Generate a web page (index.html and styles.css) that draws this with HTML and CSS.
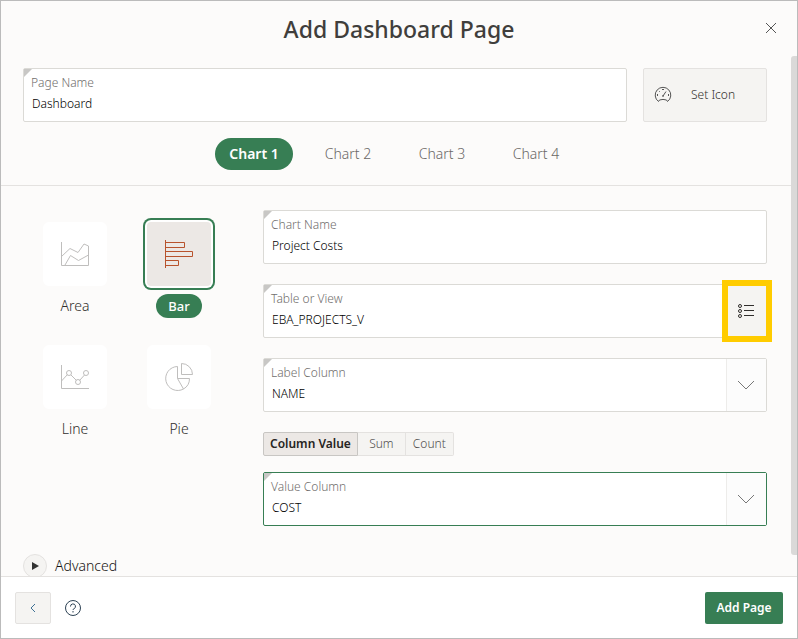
FILE: index.html
```html
<!DOCTYPE html>
<html lang="en">
<head>
    <meta charset="UTF-8">
    <meta name="viewport" content="width=device-width, initial-scale=1.0">
    <title>Add Dashboard Page</title>
    <link rel="stylesheet" href="styles.css">
</head>
<body>
    <div class="dialog">
        <header class="dialog-header">
            <h1>Add Dashboard Page</h1>
            <button type="button" class="close" aria-label="Close">
                <svg width="12" height="12" viewBox="0 0 12 12"><path d="M1 1l10 10M11 1L1 11"/></svg>
            </button>
        </header>

        <div class="dialog-body">
            <div class="page-row">
                <div class="field required">
                    <div class="field-main">
                        <label for="page-name">Page Name</label>
                        <input type="text" id="page-name" value="Dashboard">
                    </div>
                </div>
                <button type="button" class="set-icon">
                    <svg width="18" height="18" viewBox="0 0 18 18">
                        <path d="M4.500 15.500A7.800 7.800 0 1 1 13.500 15.500L12.500 14Q9 12.800 5.500 14z"/>
                        <path d="M9 10L12 5.500M8 3.500h2M3.500 8v2M14.500 8v2M5 5l.7.7"/>
                        <circle cx="9" cy="10" r=".5"/>
                    </svg>
                    <span>Set Icon</span>
                </button>
            </div>

            <nav class="tabs">
                <button type="button" class="tab active">Chart 1</button>
                <button type="button" class="tab">Chart 2</button>
                <button type="button" class="tab">Chart 3</button>
                <button type="button" class="tab">Chart 4</button>
            </nav>

            <div class="chart">
                <div class="chart-types">
                    <label class="type">
                        <input type="radio" name="type" value="area">
                        <span class="tile">
                            <svg width="32" height="32" viewBox="0 0 32 32">
                                <path d="M2.500 4v23.500h27V8l-4.500-2-6 8.500-8-4-8.500 8M6 27l5.500-9.500 8 5L29.500 17"/>
                            </svg>
                        </span>
                        <span class="type-name">Area</span>
                    </label>
                    <label class="type">
                        <input type="radio" name="type" value="bar" checked>
                        <span class="tile">
                            <svg width="32" height="32" viewBox="0 0 32 32">
                                <path d="M2.500 2v28M2.500 4.500h19v5h-19M2.500 13.500h27v5h-27M2.500 22.500h13v5h-13"/>
                            </svg>
                        </span>
                        <span class="type-name">Bar</span>
                    </label>
                    <label class="type">
                        <input type="radio" name="type" value="line">
                        <span class="tile">
                            <svg width="32" height="32" viewBox="0 0 32 32">
                                <path d="M2.500 4v23.500H30M2.500 20l6-6.500M12 14l5.500 5.500M20.500 19.500l5-5.500"/>
                                <circle cx="10" cy="12" r="2.500"/>
                                <circle cx="19" cy="21" r="2.500"/>
                                <circle cx="27" cy="12" r="2.500"/>
                            </svg>
                        </span>
                        <span class="type-name">Line</span>
                    </label>
                    <label class="type">
                        <input type="radio" name="type" value="pie">
                        <span class="tile">
                            <svg width="32" height="32" viewBox="0 0 32 32">
                                <path d="M14.500 5.500a12 12 0 1 0 6 22.500L14.500 17.500zM14.500 17.500h12a12 12 0 0 1-6 10.500M18.500 2.500a11 11 0 0 1 11 11h-11z"/>
                            </svg>
                        </span>
                        <span class="type-name">Pie</span>
                    </label>
                </div>

                <div class="chart-form">
                    <div class="field required">
                        <div class="field-main">
                            <label for="chart-name">Chart Name</label>
                            <input type="text" id="chart-name" value="Project Costs">
                        </div>
                    </div>
                    <div class="field required">
                        <div class="field-main">
                            <label for="table-name">Table or View</label>
                            <input type="text" id="table-name" value="EBA_PROJECTS_V">
                        </div>
                        <button type="button" class="pick-list" aria-label="Select table or view">
                            <svg width="18" height="16" viewBox="0 0 18 16">
                                <path d="M7 2.500h10M7 7.500h10M7 12.500h10"/>
                                <circle cx="3" cy="3" r="1.500"/>
                                <circle cx="3" cy="8" r="1.500"/>
                                <circle cx="3" cy="13" r="1.500"/>
                            </svg>
                        </button>
                    </div>
                    <div class="field required">
                        <div class="field-main">
                            <label for="label-column">Label Column</label>
                            <select id="label-column"><option>NAME</option></select>
                        </div>
                        <span class="arrow">
                            <svg width="18" height="10" viewBox="0 0 18 10"><path d="M1 1l8 8 8-8"/></svg>
                        </span>
                    </div>
                    <div class="segments">
                        <button type="button" class="segment active">Column Value</button>
                        <button type="button" class="segment">Sum</button>
                        <button type="button" class="segment">Count</button>
                    </div>
                    <div class="field required focused">
                        <div class="field-main">
                            <label for="value-column">Value Column</label>
                            <select id="value-column"><option>COST</option></select>
                        </div>
                        <span class="arrow">
                            <svg width="18" height="10" viewBox="0 0 18 10"><path d="M1 1l8 8 8-8"/></svg>
                        </span>
                    </div>
                </div>
            </div>

            <button type="button" class="advanced">
                <span class="toggle">
                    <svg width="8" height="8" viewBox="0 0 8 8"><path d="M1 0l7 4-7 4z"/></svg>
                </span>
                Advanced
            </button>
        </div>
        <div class="scroll-thumb"></div>

        <footer class="dialog-footer">
            <button type="button" class="back" aria-label="Back">
                <svg width="6" height="10" viewBox="0 0 6 10"><path d="M5 1L1 5l4 4"/></svg>
            </button>
            <button type="button" class="help" aria-label="Help">
                <svg width="18" height="18" viewBox="0 0 18 18">
                    <circle cx="9" cy="9" r="7.500"/>
                    <path d="M6.500 7.500a2.500 2.500 0 1 1 3.500 2.200q-1 .4-1 1.300M9 12v1.500"/>
                </svg>
            </button>
            <button type="button" class="add-page">Add Page</button>
        </footer>
    </div>
</body>
</html>
```
FILE: styles.css
```css
* {
    box-sizing: border-box;
}
body {
    margin: 0;
    font-family: "Noto Sans", "Open Sans", sans-serif;
    font-size: 12px;
    line-height: 16px;
    font-weight: 350;
    color: #302e2c;
}
button, input, select {
    font: inherit;
    color: inherit;
    margin: 0;
    padding: 0;
    border: 0;
    background: none;
}
button {
    cursor: pointer;
}
svg {
    display: block;
    fill: none;
    stroke: currentColor;
}

.dialog {
    position: relative;
    display: flex;
    flex-direction: column;
    height: 100vh;
    border: 1px solid #bbb;
    background-color: #fcfbfa;
}
.dialog-header {
    position: relative;
    flex: none;
    height: 55px;
    display: flex;
    justify-content: center;
    align-items: center;
}
.dialog-header h1 {
    margin: 0;
    font-size: 23px;
    line-height: 32px;
    font-weight: 500;
    color: #403e3c;
}
.close {
    position: absolute;
    right: 20px;
    top: 21px;
    color: #555;
}

.dialog-body {
    flex: 1;
    min-height: 0;
    padding-right: 6px;
    overflow-y: auto;
    scrollbar-width: none;
}
/* sits over the right edge of the scrolling body */
.scroll-thumb {
    position: absolute;
    right: 0;
    top: 55px;
    bottom: 83px;
    width: 6px;
    border-radius: 3px 0 0 3px;
    background-color: #dad9d8;
}

.page-row {
    display: flex;
    gap: 16px;
    padding: 12px 24px 0 22px;
}
.set-icon {
    flex: none;
    width: 124px;
    display: flex;
    align-items: center;
    gap: 19px;
    padding-left: 10px;
    border: 1px solid #e4e2e0;
    border-radius: 2px;
    background-color: #f5f4f2;
}
.set-icon svg {
    color: #555;
}

.field {
    position: relative;
    flex: 1;
    min-height: 54px;
    display: flex;
    border: 1px solid #dbdad6;
    border-radius: 2px;
    background-color: #fff;
}
.field.required::before {
    content: "";
    position: absolute;
    left: 0;
    top: 0;
    border-top: 8px solid #c8c7c5;
    border-right: 8px solid transparent;
}
.field.focused {
    border-color: #377e54;
}
.field-main {
    flex: 1;
    display: flex;
    flex-direction: column;
    gap: 5px;
    padding: 6px 7px;
}
.field-main label {
    color: #706e6c;
}
.field-main input, .field-main select {
    width: 100%;
    height: 16px;
    padding-left: 1px;
    color: #000;
    outline: none;
    appearance: none;
}
.arrow, .pick-list {
    flex: none;
    width: 40px;
    display: flex;
    justify-content: center;
    align-items: center;
}
.arrow {
    border-left: 1px solid #edecea;
    padding-right: 2px;
    background-color: #fcfcfc;
    color: #777;
    pointer-events: none;
}
.pick-list {
    position: relative;
    background-color: #f5f4f2;
}
.pick-list::after {
    content: "";
    position: absolute;
    inset: -5px -6px -5px -4px;
    border: 6px solid #fc0;
}

.tabs {
    display: flex;
    justify-content: center;
    gap: 16px;
    padding: 16px 24px 15px 22px;
    border-bottom: 1px solid #e4e2e0;
}
.tab {
    width: 78px;
    height: 32px;
    border-radius: 16px;
    font-size: 14px;
    color: #6a6866;
}
.tab.active {
    background-color: #377e54;
    color: #fff;
    font-weight: 600;
}

.chart {
    display: flex;
    padding: 24px 24px 28px 22px;
}
.chart-types {
    flex: none;
    width: 240px;
    display: grid;
    grid-template-columns: 64px 64px;
    column-gap: 40px;
    row-gap: 27px;
    align-content: start;
    padding: 12px 20px;
}
.type {
    position: relative;
    display: flex;
    flex-direction: column;
    align-items: center;
    gap: 8px;
    font-size: 14px;
    cursor: pointer;
}
.type input {
    position: absolute;
    opacity: 0;
}
.tile {
    width: 64px;
    height: 64px;
    display: flex;
    justify-content: center;
    align-items: center;
    border-radius: 6px;
    background-color: #fff;
    color: #bfbebd;
}
.type-name {
    padding: 0 12px;
    line-height: 24px;
    border-radius: 12px;
}
.type input:checked + .tile {
    background-color: #ece8e5;
    color: #b8532d;
    border-radius: 4px;
    box-shadow: 0 0 0 2px #fff, 0 0 0 4px #377e54;
}
.type input:checked ~ .type-name {
    background-color: #377e54;
    color: #fff;
    font-size: 13px;
    font-weight: 500;
}

.chart-form {
    flex: 1;
    display: flex;
    flex-direction: column;
    gap: 20px;
}
.segments {
    display: flex;
    margin-bottom: -4px;
}
.segment {
    min-width: 48px;
    height: 24px;
    padding: 0 6px;
    border: 1px solid #e4e2e0;
    border-left: 0;
    background-color: #f5f4f2;
    color: #504e4c;
}
.segment:last-child {
    border-radius: 0 2px 2px 0;
}
.segment.active {
    border: 1px solid #c8c6c3;
    border-radius: 2px 0 0 2px;
    background-color: #ece8e5;
    color: #262422;
    font-weight: 600;
}

.advanced {
    display: flex;
    align-items: center;
    gap: 8px;
    margin-left: 22px;
    font-size: 14px;
    color: #161412;
}
.toggle {
    width: 24px;
    height: 24px;
    display: flex;
    justify-content: center;
    align-items: center;
    border: 1px solid #e4e2e0;
    border-radius: 50%;
    background-color: #f5f4f2;
}
.toggle svg {
    fill: #333;
    stroke: none;
}

.dialog-footer {
    flex: none;
    display: flex;
    align-items: center;
    gap: 13px;
    padding: 15px 14px 14px;
    border-top: 1px solid #e4e2e0;
    background-color: #fff;
}
.back {
    width: 36px;
    height: 32px;
    display: flex;
    justify-content: center;
    align-items: center;
    border: 1px solid #e4e2e0;
    border-radius: 2px;
    background-color: #f5f4f2;
    color: #3f7195;
}
.help {
    color: #2d4254;
}
.add-page {
    height: 32px;
    width: 78px;
    margin-left: auto;
    border-radius: 2px;
    background-color: #377e54;
    color: #fff;
    font-weight: 600;
}
```
